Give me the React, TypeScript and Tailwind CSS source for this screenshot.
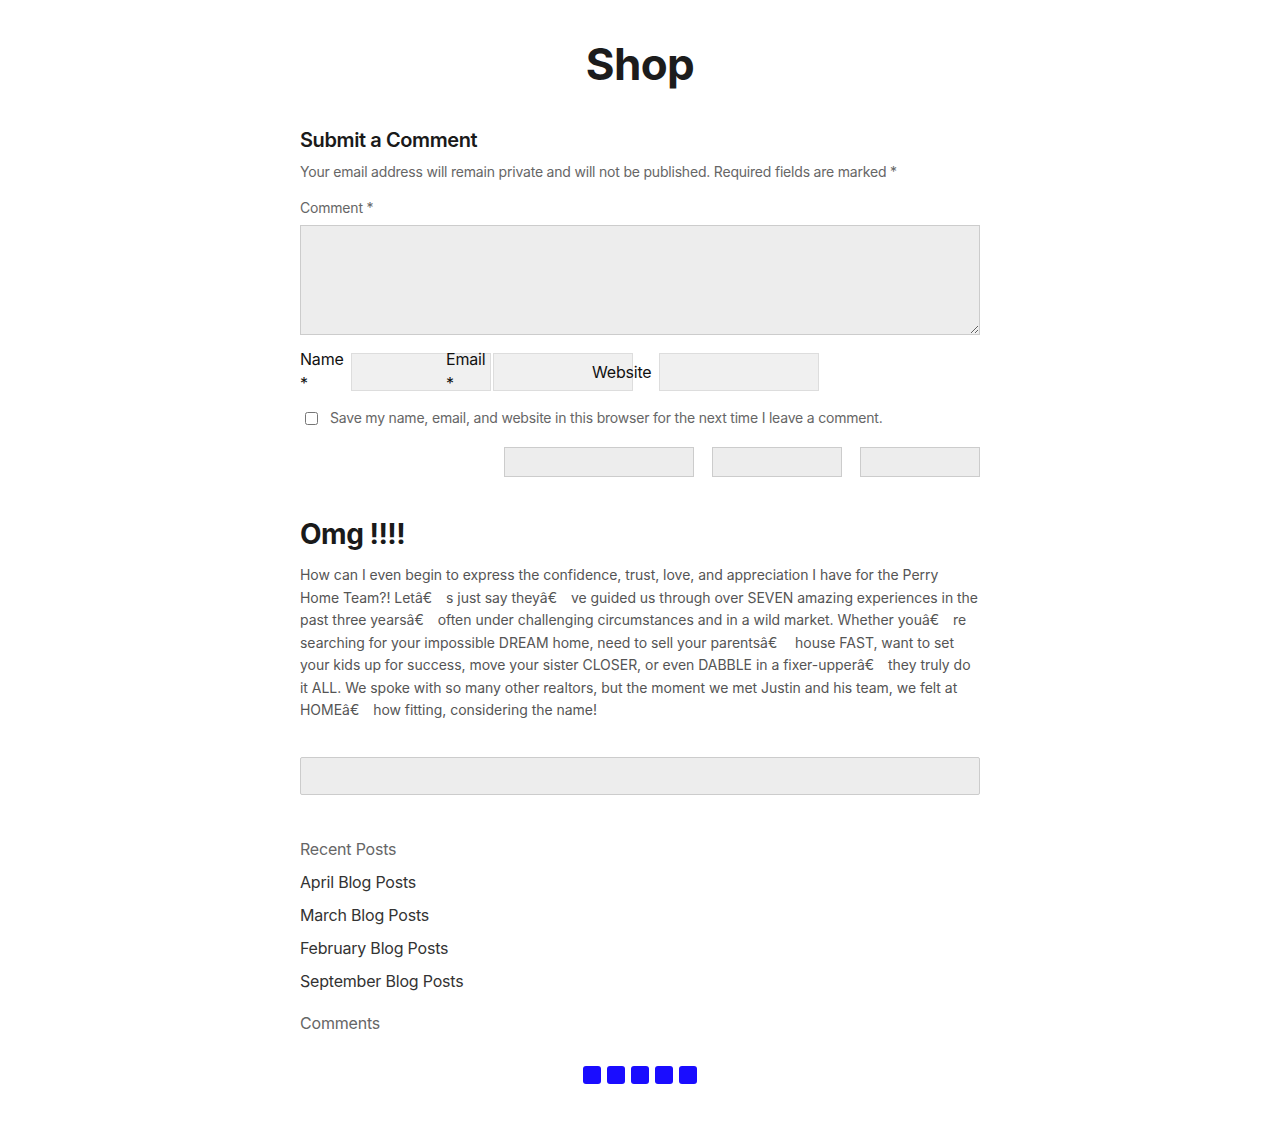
import React from "react";

const gap = "\u2002\u2002";

export default function App() {
  return (
    <div className="min-h-[1144px] bg-white tracking-[-0.2px]" style={{ fontFamily: "Inter, 'Noto Sans', sans-serif" }}>
      <div className="mx-auto w-[680px] pt-[37px]">
        <h1 className="text-center text-[44px] font-bold leading-[54px] tracking-[-0.6px] text-[#1c1c1c]">Shop</h1>

        <h3 className="mt-[36px] text-[20px] font-semibold leading-[26px] tracking-[-0.4px] text-[#1a1a1a]">Submit a Comment</h3>
        <p className="mt-[9px] text-[14px] leading-[20px] text-[#666]">
          Your email address will remain private and will not be published. Required fields are marked *
        </p>
        <p className="mt-[16px] text-[14px] leading-[20px] text-[#666]">Comment *</p>
        <textarea className="mt-[7px] block h-[110px] w-full resize-y border border-[#ccc] bg-[#ededed]" />

        <div className="mt-[12px] flex items-start text-[16px] leading-[24px] text-[#111]">
          <label className="w-[51px]">Name *</label>
          <input className="mt-[6px] h-[38px] w-[140px] border border-[#ddd] bg-[#f0f0f0]" />
          <label className="relative ml-[-45px] w-[47px]">Email *</label>
          <input className="mt-[6px] h-[38px] w-[140px] border border-[#ddd] bg-[#f0f0f0]" />
          <label className="relative ml-[-41px] mt-[13px] w-[67px]">Website</label>
          <input className="mt-[6px] h-[38px] w-[160px] border border-[#ddd] bg-[#f0f0f0]" />
        </div>

        <div className="mt-[13px] flex items-center">
          <input type="checkbox" className="ml-[5px] h-[13px] w-[13px]" />
          <span className="ml-[12px] text-[14px] leading-[20px] text-[#666]">
            Save my name, email, and website in this browser for the next time I leave a comment.
          </span>
        </div>

        <div className="mt-[19px] flex justify-end gap-[18px]">
          <div className="h-[30px] w-[190px] border border-[#ccc] bg-[#ededed]" />
          <div className="h-[30px] w-[130px] border border-[#ccc] bg-[#ededed]" />
          <div className="h-[30px] w-[120px] border border-[#ccc] bg-[#ededed]" />
        </div>

        <h2 className="mt-[40px] text-[28px] font-bold leading-[34px] tracking-[-0.5px] text-[#1a1a1a]">Omg !!!!</h2>
        <p className="mt-[13px] text-[14px] leading-[22.5px] tracking-[-0.03px] text-[#555]">
          How can I even begin to express the confidence, trust, love, and appreciation I have for the Perry Home Team?! Letâ€{gap}s just say theyâ€{gap}ve guided us through over SEVEN amazing experiences in the past three yearsâ€{gap}often under challenging circumstances and in a wild market. Whether youâ€{gap}re searching for your impossible DREAM home, need to sell your parentsâ€{gap} house FAST, want to set your kids up for success, move your sister CLOSER, or even DABBLE in a fixer-upperâ€{gap}they truly do it ALL. We spoke with so many other realtors, but the moment we met Justin and his team, we felt at HOMEâ€{gap}how fitting, considering the name!
        </p>

        <div className="mt-[35px] h-[38px] w-full rounded-[2px] border border-[#ccc] bg-[#ededed]" />

        <div className="mt-[42px] text-[16px] leading-[24px]">
          <p className="text-[#666]">Recent Posts</p>
          <ul className="mt-[9px] flex flex-col gap-[9px] text-[#333]">
            <li>April Blog Posts</li>
            <li>March Blog Posts</li>
            <li>February Blog Posts</li>
            <li>September Blog Posts</li>
          </ul>
          <p className="mt-[18px] text-[#666]">Comments</p>
        </div>

        <div className="mt-[31px] flex justify-center gap-[6px] pb-[60px]">
          {[0, 1, 2, 3, 4].map((i) => (
            <div key={i} className="h-[18px] w-[18px] rounded-[3px] bg-[#1a0dff]" />
          ))}
        </div>
      </div>
    </div>
  );
}
